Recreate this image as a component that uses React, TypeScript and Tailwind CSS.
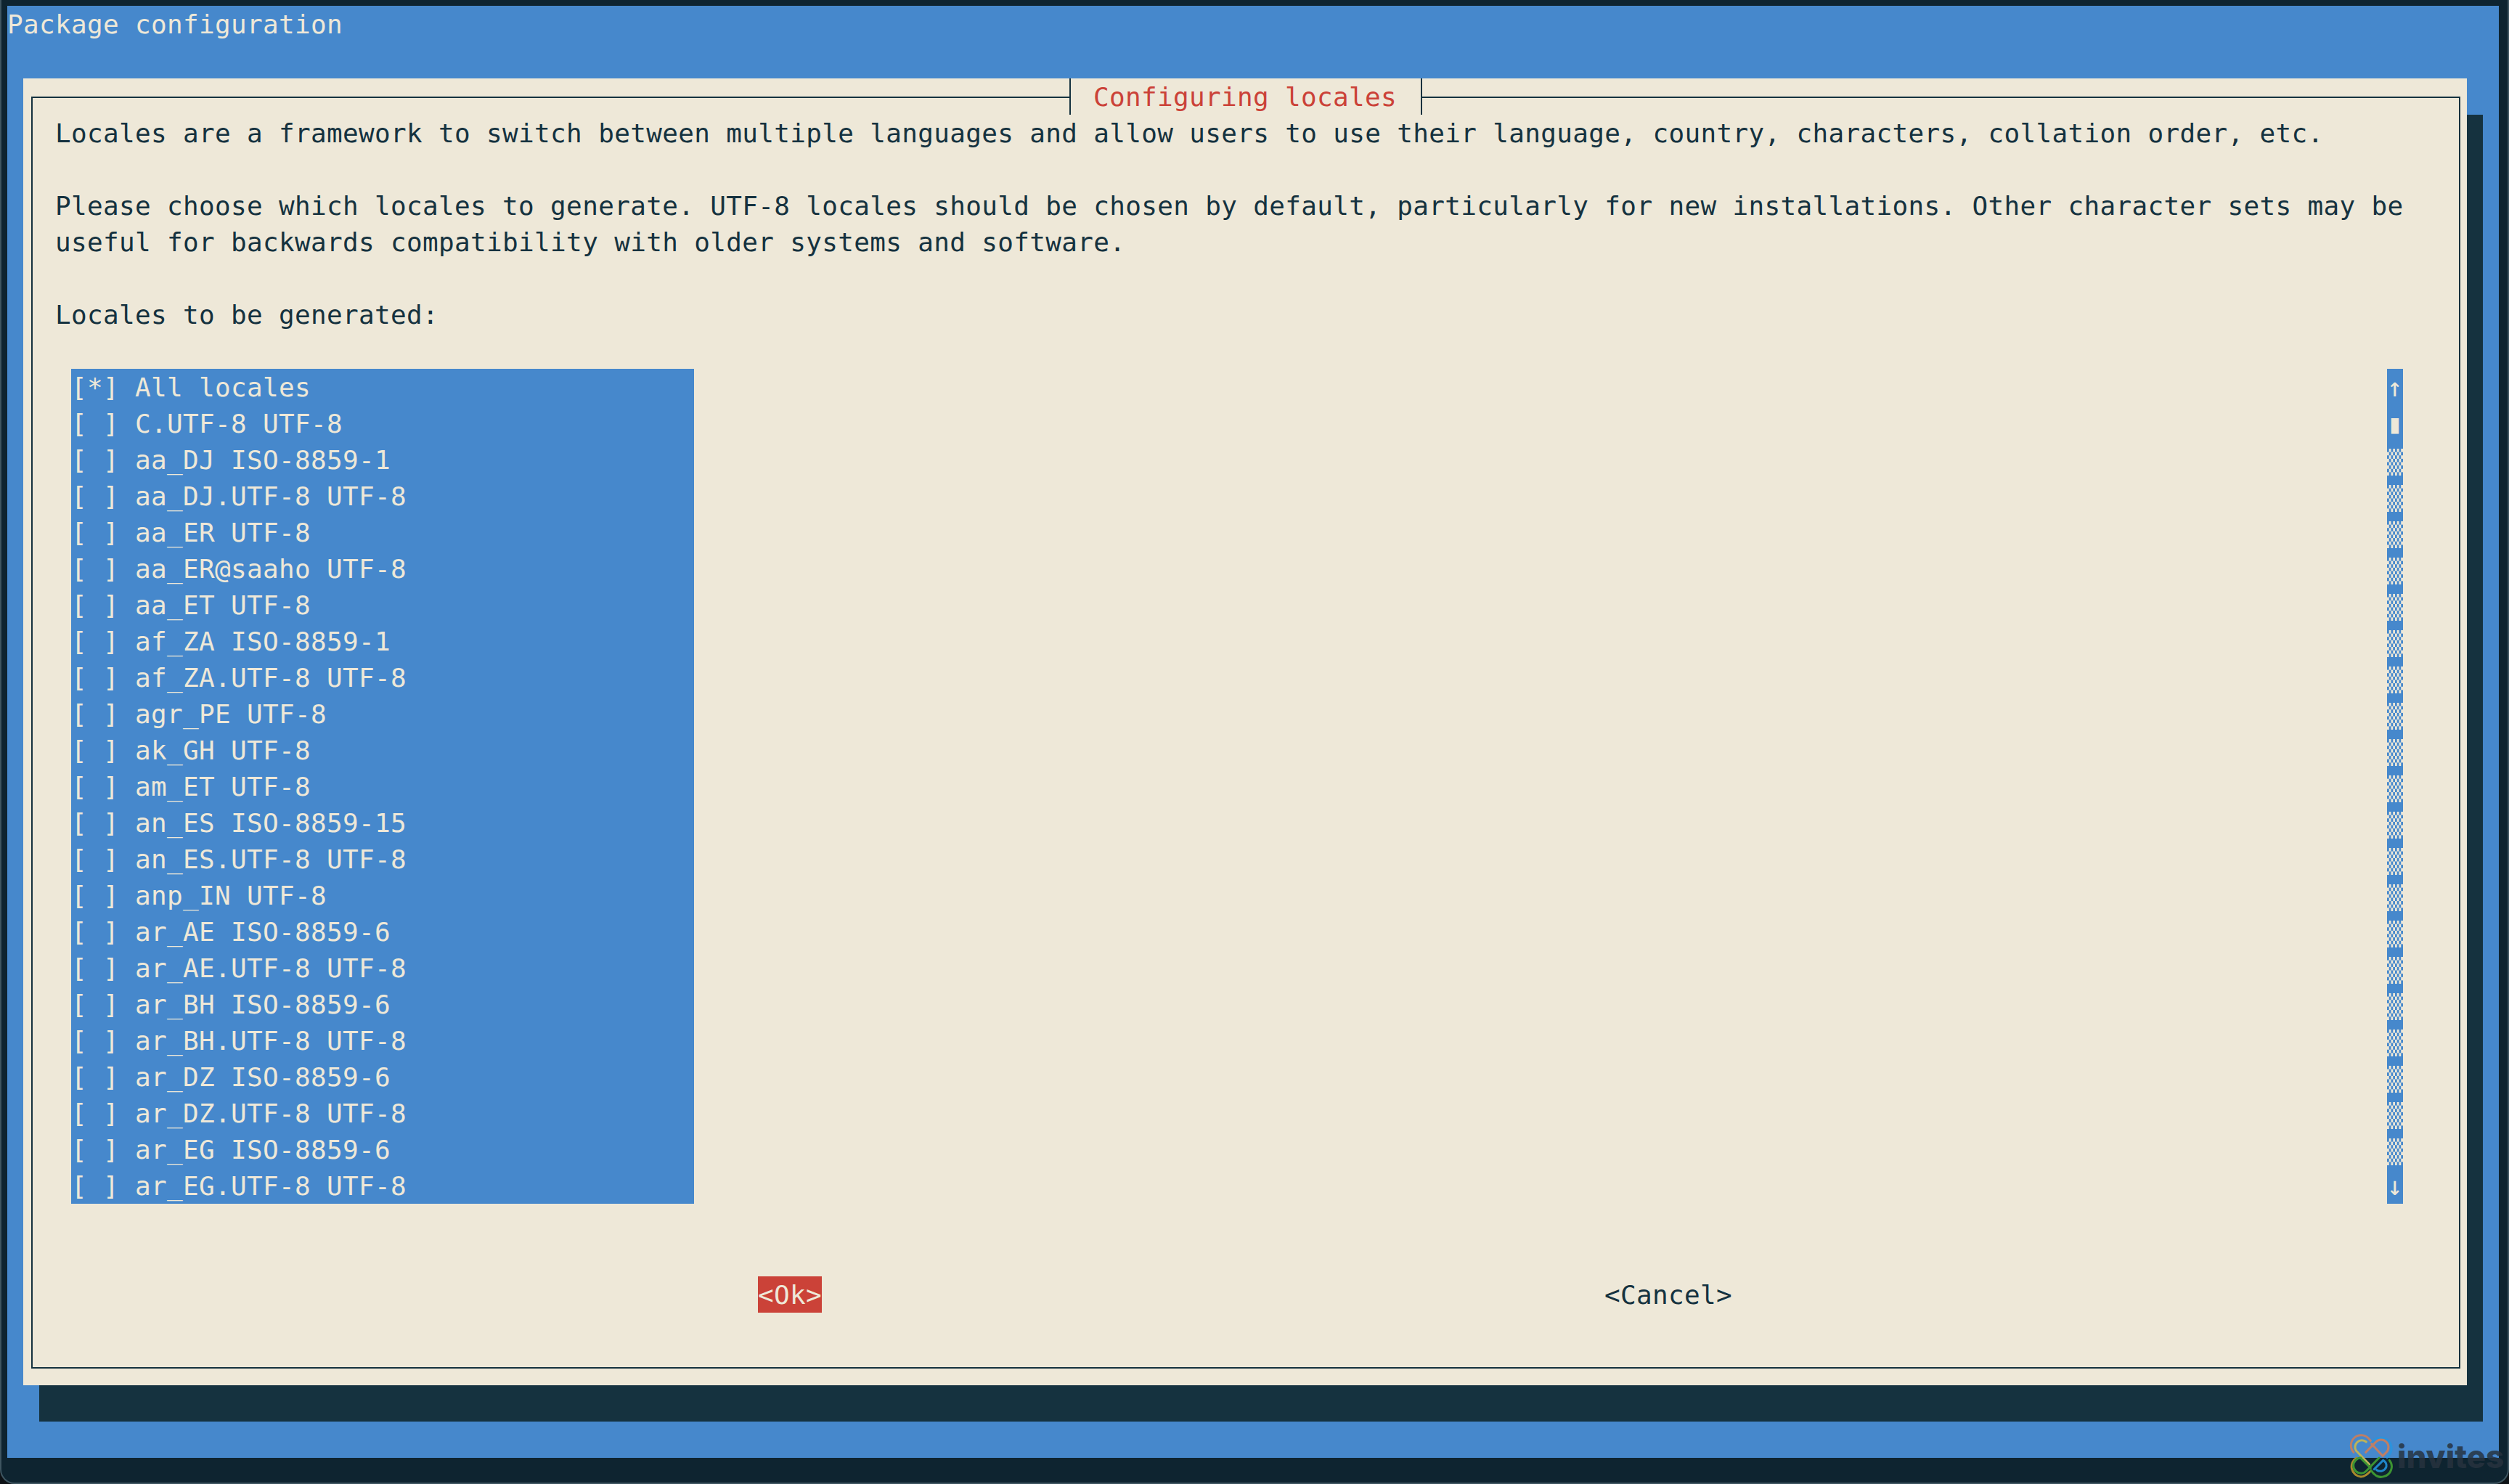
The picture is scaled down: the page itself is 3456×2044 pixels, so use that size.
import type { ReactNode } from "react";

const listItems = [
  "[*] All locales",
  "[ ] C.UTF-8 UTF-8",
  "[ ] aa_DJ ISO-8859-1",
  "[ ] aa_DJ.UTF-8 UTF-8",
  "[ ] aa_ER UTF-8",
  "[ ] aa_ER@saaho UTF-8",
  "[ ] aa_ET UTF-8",
  "[ ] af_ZA ISO-8859-1",
  "[ ] af_ZA.UTF-8 UTF-8",
  "[ ] agr_PE UTF-8",
  "[ ] ak_GH UTF-8",
  "[ ] am_ET UTF-8",
  "[ ] an_ES ISO-8859-15",
  "[ ] an_ES.UTF-8 UTF-8",
  "[ ] anp_IN UTF-8",
  "[ ] ar_AE ISO-8859-6",
  "[ ] ar_AE.UTF-8 UTF-8",
  "[ ] ar_BH ISO-8859-6",
  "[ ] ar_BH.UTF-8 UTF-8",
  "[ ] ar_DZ ISO-8859-6",
  "[ ] ar_DZ.UTF-8 UTF-8",
  "[ ] ar_EG ISO-8859-6",
  "[ ] ar_EG.UTF-8 UTF-8",
];

function Row({ children, className = "" }: { children?: ReactNode; className?: string }) {
  return <div className={`h-[50px] whitespace-pre ${className}`}>{children}</div>;
}

function Logo() {
  return (
    <svg viewBox="0 0 204 204" className="h-[68px] w-[68px]" fill="none" strokeWidth="9" strokeLinecap="round">
      <path d="M30 85 A42 42 0 0 1 92 28 L104 42" stroke="#bd7f66" />
      <path d="M104 46 A42 42 0 0 1 180 92 L168 106" stroke="#2b93dd" />
      <path d="M80 85 L122 42 A30 30 0 0 1 165 85 L150 100 L104 50" stroke="#bd7f66" />
      <path d="M82 42 A28 28 0 0 0 40 78 L95 135" stroke="#bdb35a" />
      <path d="M42 108 A42 42 0 0 0 60 186 C78 186 90 172 102 160" stroke="#a98a2c" />
      <path d="M60 108 A28 28 0 0 0 62 172 C80 172 92 150 135 108" stroke="#3c9432" />
      <path d="M58 108 L100 150" stroke="#3c9432" />
      <path d="M102 160 C120 186 140 190 155 185 A42 42 0 0 0 178 118" stroke="#3c9432" />
      <path d="M115 155 L152 118 M152 118 A26 26 0 0 1 165 145 A26 26 0 0 1 125 158" stroke="#1f86c9" />
    </svg>
  );
}

export default function App() {
  return (
    <div className="relative h-[2044px] w-[3456px] overflow-hidden bg-[#0d1216] font-['DejaVu_Sans_Mono',monospace] text-[36px] leading-[52px] tracking-[0.33px]">
      <div className="h-full rounded-b-[20px] border-x-2 border-b-2 border-[#3e5560] bg-[#0e2430] pl-2 pr-3 pt-2">
        <div className="h-[2000px] w-[3432px] bg-[#4688cc] text-[#eee8d8]">
          <Row>Package configuration</Row>
          <div className="ml-[22px] mt-[50px] h-[1800px] w-[3366px] bg-[#eee8d8] pl-[11px] pt-[25px] text-[#15323f] shadow-[22px_50px_0_#15323f]">
            <div className="relative h-[1752px] w-[3346px] border-2 border-[#15323f] pl-[31px] pt-[23px]">
              <div className="absolute left-[1428px] top-[-27px] h-[50px] w-[486px] border-x-2 border-[#15323f] bg-[#eee8d8] pl-[31px] text-[#cb4238]">
                Configuring locales
              </div>
              <Row>Locales are a framework to switch between multiple languages and allow users to use their language, country, characters, collation order, etc.</Row>
              <Row />
              <Row>Please choose which locales to generate. UTF-8 locales should be chosen by default, particularly for new installations. Other character sets may be</Row>
              <Row>useful for backwards compatibility with older systems and software.</Row>
              <Row />
              <Row>Locales to be generated:</Row>
              <Row />
              <div className="flex items-start justify-between pr-[77px]">
                <div className="ml-[22px] w-[858px] bg-[#4688cc] text-[#eee8d8]">
                  {listItems.map((item) => (
                    <Row key={item}>{item}</Row>
                  ))}
                </div>
                <div className="w-[22px] bg-[#4688cc] text-[#eee8d8]">
                  <Row>↑</Row>
                  <Row>▮</Row>
                  {Array.from({ length: 20 }, (_, i) => (
                    <div key={i} className="h-[50px] pt-[10px]">
                      <div className="h-[37px] bg-[repeating-conic-gradient(#eee8d8_0_25%,#4688cc_0_50%)] bg-[length:5.5px_9.25px]" />
                    </div>
                  ))}
                  <Row>↓</Row>
                </div>
              </div>
              <div className="mt-[100px] flex h-[50px]">
                <div className="ml-[968px] h-[50px] w-[88px] bg-[#cb4238] text-[#eee8d8]">{"<Ok>"}</div>
                <div className="ml-[1078px]">{"<Cancel>"}</div>
              </div>
            </div>
          </div>
        </div>
      </div>
      <div className="absolute left-[3232px] top-[1972px] flex h-[68px] items-center gap-[2px]">
        <Logo />
        <span className="font-['Inter',sans-serif] text-[44px] font-extrabold leading-[68px] tracking-normal text-[#27333f]/85">invites</span>
      </div>
    </div>
  );
}
